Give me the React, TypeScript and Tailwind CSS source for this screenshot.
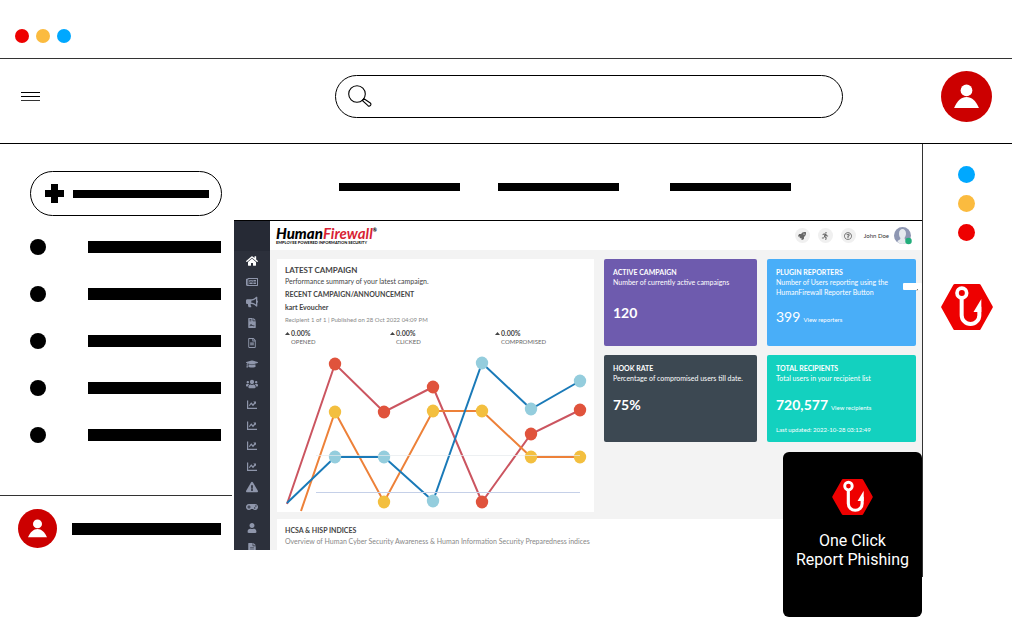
import React from "react";
import {
  FaHome, FaRegNewspaper, FaBullhorn, FaFileAlt, FaRegFileAlt, FaGraduationCap, FaUsers,
  FaExclamationTriangle, FaGamepad, FaUser, FaRocket, FaRunning, FaRegQuestionCircle, FaFileContract,
} from "react-icons/fa";

function ChartIcon() {
  return (
    <svg viewBox="0 0 20 18" className="h-[9px] w-[10px]" fill="none" stroke="currentColor" strokeWidth="2.4">
      <path d="M1.2 1v15.6H20" />
      <path d="M4.5 11.5l4-5 3.5 4 4.5-5.5" />
      <path d="M12.5 3H18v5.5z" fill="currentColor" stroke="none" />
    </svg>
  );
}

function Person({ className }: { className: string }) {
  return (
    <svg viewBox="-76 -76 152 152" className={className} aria-hidden="true">
      <circle r="76" fill="#cc0000" />
      <circle cy="-18" r="17.5" fill="#fff" />
      <path d="M-37 34C-28 13-15 1.500 0 1.500S28 13 37 34Z" fill="#fff" />
    </svg>
  );
}

function HookLogo({ className }: { className: string }) {
  return (
    <svg viewBox="0 0 155 138" className={className} aria-hidden="true">
      <path d="M41 5H114L150 69 114 133H41L5 69Z" fill="#ee0000" stroke="#ee0000" strokeWidth="10" strokeLinejoin="round" />
      <circle cx="62" cy="27" r="14.500" fill="none" stroke="#fff" strokeWidth="11" />
      <path d="M61.500 43V93.500a26.500 26.500 0 0 0 53 0V68" fill="none" stroke="#fff" strokeWidth="12" />
      <path d="M120.500 45V84H97Z" fill="#fff" />
    </svg>
  );
}

const sideIcons = [
  FaHome, FaRegNewspaper, FaBullhorn, FaFileContract, FaRegFileAlt, FaGraduationCap, FaUsers,
  ChartIcon, ChartIcon, ChartIcon, ChartIcon, FaExclamationTriangle, FaGamepad, FaUser, FaFileAlt,
];
const sideNames = [
  "Home", "News", "Campaigns", "Contracts", "Documents", "Training", "Groups",
  "Trends", "Scores", "Rates", "Growth", "Alerts", "Games", "Profile", "Reports",
];
const wideIcons = ["Home", "News", "Campaigns", "Training", "Groups", "Alerts", "Games"];

const xs = [58, 107, 156, 205, 254, 303];
const series = [
  { line: "#cb5560", dot: "#e0533c", start: [10, 154], ys: [14, 62, 37, 152, 84, 60] },
  { line: "#ed8139", dot: "#f3bf3f", start: [24, 161], ys: [62, 152, 61, 61, 107, 107] },
  { line: "#1a7ab8", dot: "#94cddd", start: [10, 153], ys: [107, 107, 151, 13, 59, 31] },
];

function Chart() {
  return (
    <svg viewBox="0 0 317 162" className="block w-full" role="img" aria-label="Campaign performance">
      {series.map((s) => (
        <g key={s.line}>
          <polyline
            points={[s.start.join(","), ...xs.map((x, i) => `${x},${s.ys[i]}`)].join(" ")}
            fill="none" stroke={s.line} strokeWidth="2"
          />
          {xs.map((x, i) => <ellipse key={x} cx={x} cy={s.ys[i]} rx="6.200" ry="6.500" fill={s.dot} />)}
        </g>
      ))}
      <path d="M39 105.500H303" stroke="#e6e9ec" strokeOpacity=".7" />
      <path d="M39 142.500H303" stroke="#c5d0e8" />
    </svg>
  );
}

function Stat({ label, className }: { label: string; className: string }) {
  return (
    <div className={className}>
      <p className="flex items-center gap-px text-[7px] leading-[9px] font-bold">
        <svg viewBox="0 0 5 3" className="h-[3px] w-[5px]"><path d="M0 3L2.500 0 5 3z" fill="#444" /></svg>0.00%
      </p>
      <p className="pl-[6px] text-[6px] leading-[8px] text-[#666]">{label}</p>
    </div>
  );
}

type TileProps = {
  title: string; text: React.ReactNode; value: string; color: string;
  textClass: string; link?: string; note?: string; valueClass?: string;
};
function Tile({ title, text, value, color, link, note, textClass, valueClass = "font-bold" }: TileProps) {
  return (
    <section className={`flex h-[87px] flex-col rounded-[2px] px-[9px] pt-[8px] text-white ${color}`}>
      <h3 className="text-[7px] leading-[10px] font-bold">{title}</h3>
      <p className={`text-[7px] leading-[10px] whitespace-nowrap ${textClass}`}>{text}</p>
      <p className="flex items-baseline gap-[3px]">
        <span className={`text-[14px] leading-[22px] ${valueClass}`}>{value}</span>
        {link && <a href="#" className="text-[6px]">{link}</a>}
      </p>
      {note && <p className="mt-[10px] text-[6px] leading-[8px]">{note}</p>}
    </section>
  );
}

function Dashboard() {
  return (
    <div className="flex h-[330px] border-t border-black bg-[#f3f3f3] font-['Lato',sans-serif] text-[#444]">
      <nav className="w-[36px] shrink-0 overflow-hidden bg-[#2c303b]" aria-label="Dashboard">
        <div className="h-[30px] bg-[#262a35]" />
        <div className="flex h-[307px] flex-col justify-between text-[#8f96ab]">
          {sideIcons.map((Icon, i) => (
            <a
              key={sideNames[i]} href="#" aria-label={sideNames[i]}
              className={`flex h-5 items-center justify-center first:text-white ${wideIcons.includes(sideNames[i]) ? "text-[12px]" : "text-[10px]"}`}
            >
              <Icon />
            </a>
          ))}
        </div>
      </nav>
      <div className="flex min-w-0 flex-1 flex-col">
        <header className="flex h-[29px] shrink-0 items-center bg-white pr-[10px] pl-[6px]">
          <div className="flex-1">
            <p className="flex text-[15px] leading-[15px] font-black text-black italic">
              Human<span className="font-bold text-[#d81f35]">Firewall</span>
              <sup className="top-0 text-[5px] leading-[8px] not-italic">®</sup>
            </p>
            <p className="text-[4px] leading-[4px] font-bold text-black">EMPLOYEE POWERED INFORMATION SECURITY</p>
          </div>
          <div className="flex items-center gap-[8px] text-[8px] text-[#666]">
            <button aria-label="Launch" className="grid size-[15px] place-items-center rounded-full bg-[#f0f0f0]"><FaRocket /></button>
            <button aria-label="Activity" className="grid size-[15px] place-items-center rounded-full bg-[#f0f0f0]"><FaRunning /></button>
            <button aria-label="Help" className="grid size-[15px] place-items-center rounded-full bg-[#f0f0f0]"><FaRegQuestionCircle /></button>
            <span className="text-[6px] text-[#333]">John Doe</span>
            <svg viewBox="0 0 36 36" className="-ml-[3px] size-[18px]" aria-hidden="true">
              <circle cx="17" cy="17" r="17" fill="#8e97b3" />
              <path d="M10 13c0-12 14-12 14 0 0 5-2 7-3 9l1 3c4 1 5 3 5 5-6 5-14 5-20 0 0-3 2-4 5-5l1-3c-2-2-3-5-3-9z" fill="#e6eaee" />
              <circle cx="29" cy="28" r="6.500" fill="#22ad7b" />
            </svg>
          </div>
        </header>
        <div className="flex gap-[10px] pt-[9px] pr-[6px] pl-[7px]">
          <section className="h-[253px] min-w-0 flex-1 bg-white pt-[6px]">
            <div className="h-[85px] px-[8px]">
              <h2 className="text-[8px] leading-[11px] font-bold">LATEST CAMPAIGN</h2>
              <p className="text-[7px] leading-[11px]">Performance summary of your latest campaign.</p>
              <h3 className="mt-[2px] text-[7px] leading-[11px] font-bold">RECENT CAMPAIGN/ANNOUNCEMENT</h3>
              <p className="mt-[2px] text-[7px] leading-[11px] font-bold">kart Evoucher</p>
              <p className="mt-[1px] text-[6px] leading-[11px] text-[#888]">Recipient 1 of 1 | Published on 28 Oct 2022 04:09 PM</p>
              <div className="mt-[4px] flex">
                <Stat label="OPENED" className="w-[105px]" />
                <Stat label="CLICKED" className="w-[105px]" />
                <Stat label="COMPROMISED" className="flex-1" />
              </div>
            </div>
            <Chart />
          </section>
          <div className="grid w-[312px] shrink-0 grid-cols-[153px_1fr] content-start gap-x-[10px] gap-y-[9px]">
            <Tile title="ACTIVE CAMPAIGN" text="Number of currently active campaigns" value="120" textClass="h-[25px]" color="bg-[#6e5bae]" />
            <Tile title="PLUGIN REPORTERS" text={<>Number of Users reporting using the<br />HumanFirewall Reporter Button</>} value="399" textClass="h-[25px]" valueClass="pt-[4px] font-normal" link="View reporters" color="bg-[#49aef8]" />
            <Tile title="HOOK RATE" text="Percentage of compromised users till date." value="75%" textClass="h-[21px]" color="bg-[#3c4852]" />
            <Tile title="TOTAL RECIPIENTS" text="Total users in your recipient list" value="720,577" textClass="h-[21px]" link="View recipients" note="Last updated:  2022-10-28 03:12:49" color="bg-[#13d1bf]" />
          </div>
        </div>
        <section className="mt-[7px] ml-[7px] flex-1 bg-white px-[8px] pt-[6px]">
          <h2 className="text-[7px] leading-[11px] font-bold">HCSA &amp; HISP INDICES</h2>
          <p className="text-[7px] leading-[10px] text-[#888]">Overview of Human Cyber Security Awareness &amp; Human Information Security Preparedness indices</p>
        </section>
      </div>
    </div>
  );
}

export default function App() {
  return (
    <div className="bg-white text-black">
      <div className="flex h-[59px] items-center gap-[7px] border-b border-[#333] px-[15px] pt-[13px]">
        <span className="size-[14px] rounded-full bg-[#ee0000]" />
        <span className="size-[14px] rounded-full bg-[#fbbb3f]" />
        <span className="size-[14px] rounded-full bg-[#00a8ff]" />
      </div>
      <header className="flex h-[85px] items-center border-b border-black pr-[20px] pl-[21px] pb-[10px]">
        <button aria-label="Menu" className="flex w-[19px] flex-col gap-[3px]">
          <span className="h-px w-full bg-black" />
          <span className="h-px w-full bg-black" />
          <span className="h-px w-full bg-[#333]" />
        </button>
        <label className="mr-[98px] ml-[295px] flex h-[43px] min-w-0 flex-1 items-center rounded-full border border-black pl-[12px]">
          <svg viewBox="0 0 24 22" className="h-[22px] w-[24px]" fill="none" stroke="#000" strokeWidth="1.100" aria-hidden="true">
            <circle cx="9" cy="9" r="8.300" />
            <path d="M14.300 15.500l1.700-1.700 6.300 4.200c1.800 1.500-.6 4-2.300 2.700z" />
          </svg>
          <input type="search" aria-label="Search" className="h-full min-w-0 flex-1 bg-transparent px-2 outline-none" />
        </label>
        <button aria-label="Account"><Person className="block size-[51px]" /></button>
      </header>
      <div className="flex items-start">
        <aside className="w-[234px] shrink-0 pt-[27px]">
          <button aria-label="New" className="ml-[30px] flex h-[45px] w-[192px] items-center rounded-full border border-black pl-[14px]">
            <svg viewBox="0 0 19 19" className="size-[19px]" aria-hidden="true">
              <path d="M6 0h7v6h6v7h-6v6H6v-6H0V6h6z" />
            </svg>
            <span className="ml-[9px] h-[8px] w-[136px] bg-black" />
          </button>
          <nav className="mt-[7px] mb-[37px]" aria-label="Folders">
            {["One", "Two", "Three", "Four", "Five"].map((n) => (
              <a key={n} href="#" aria-label={n} className="flex h-[47px] items-center pr-[13px] pl-[30px]">
                <span className="mr-[42px] size-[16px] rounded-full bg-black" />
                <span className="h-[12px] flex-1 bg-black" />
              </a>
            ))}
          </nav>
          <div className="mr-[2px] border-t border-[#333]" />
          <div className="flex items-center pt-[13px] pr-[13px] pl-[18px]">
            <Person className="block size-[39px]" />
            <span className="ml-[15px] h-[12px] flex-1 bg-black" />
          </div>
        </aside>
        <main className="relative min-w-0 flex-1 pb-[67px]">
          <div className="flex h-[76px] pt-[39px] pl-[105px]">
            <span className="h-[8px] w-[121px] bg-black" />
            <span className="ml-[38px] h-[8px] w-[121px] bg-black" />
            <span className="ml-[51px] h-[8px] w-[121px] bg-black" />
          </div>
          <Dashboard />
          <svg viewBox="0 0 19 9" className="absolute top-[138px] right-0 h-[9px] w-[19px]" aria-hidden="true">
            <rect y="1" width="19" height="7" rx="1" fill="#fff" />
            <path d="M13 8.500l2-1.500v1z" fill="#222" />
          </svg>
          <button className="absolute top-[308px] right-0 flex h-[165px] w-[139px] flex-col items-center rounded-[6px] bg-black pt-[27px] font-['Roboto',sans-serif] text-[16px] leading-[19px] text-white">
            <HookLogo className="h-[36px] w-[41px]" />
            <span className="mt-[16px]">One Click<br />Report Phishing</span>
          </button>
        </main>
        <aside className="flex h-[433px] w-[90px] shrink-0 flex-col items-center border-l border-[#333] pt-[22px] pr-[2px]">
          <span className="size-[17px] rounded-full bg-[#00a8ff]" />
          <span className="mt-[12px] size-[17px] rounded-full bg-[#fbbb3f]" />
          <span className="mt-[12px] size-[17px] rounded-full bg-[#ee0000]" />
          <HookLogo className="mt-[43px] h-[46px] w-[52px]" />
        </aside>
      </div>
    </div>
  );
}
